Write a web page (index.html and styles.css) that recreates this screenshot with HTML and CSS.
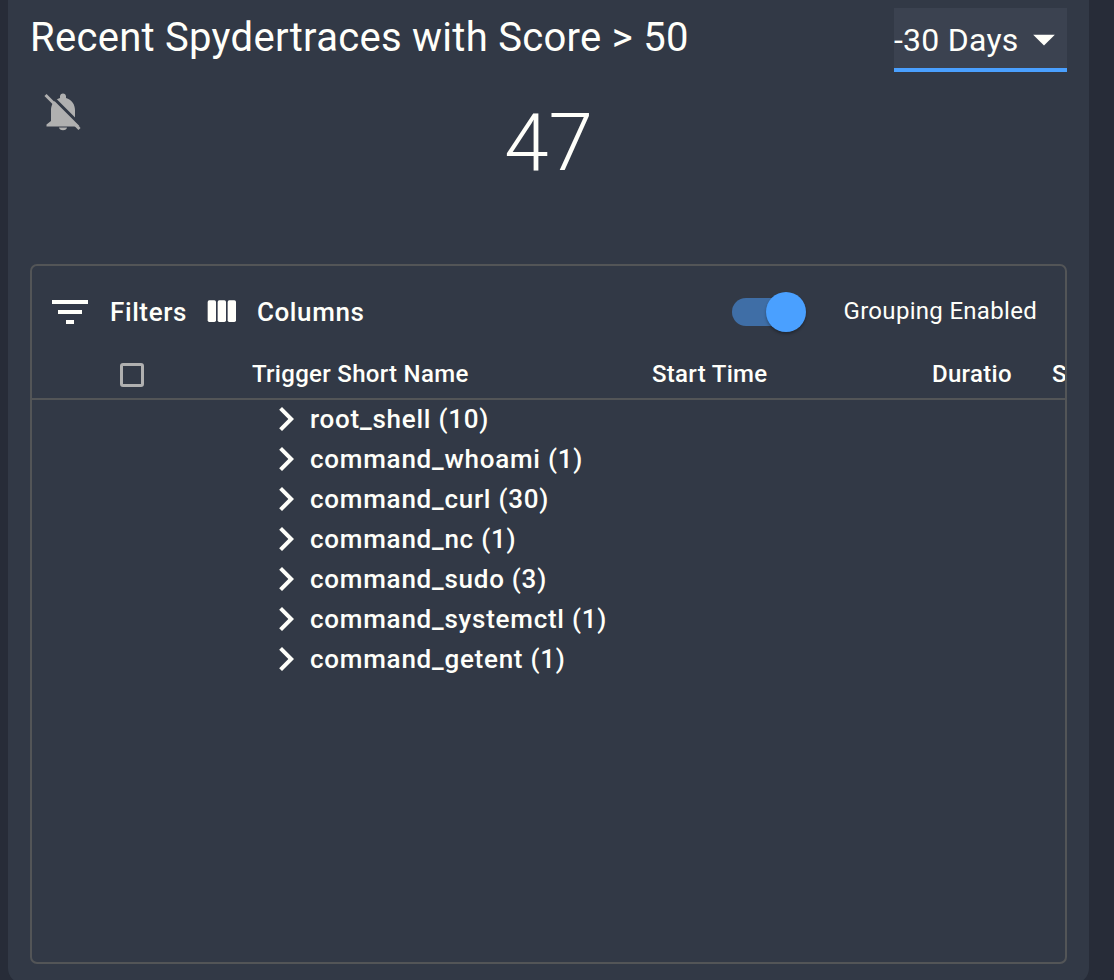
FILE: index.html
```html
<!DOCTYPE html>
<html lang="en">
<head>
<meta charset="utf-8">
<title>Recent Spydertraces</title>
<link rel="stylesheet" href="styles.css">
</head>
<body>
<main class="panel">
  <header class="head">
    <h1 class="title">Recent Spydertraces with Score &gt; 50</h1>
    <div class="select"><span class="select-text">-30 Days</span><svg class="select-arrow" viewBox="0 0 24 24"><path d="M7 10l5 5 5-5z"/></svg></div>
  </header>
  <section class="stat">
    <svg class="bell" viewBox="0 0 48 48">
      <path d="M27 5.5c-1.6 0-3 1.3-3 3V10c-5.5 1.4-9 6.3-9 12v11l-4.5 3.5v2h33v-2L39 33V22c0-5.7-3.5-10.6-9-12V8.500c0-1.700-1.400-3-3-3z"/>
      <path d="M23 39.500h8c0 1.500-1.800 2.800-4 2.800s-4-1.300-4-2.800z"/>
      <path class="bell-gap" d="M11 3.500L46 38.500"/>
      <path class="bell-slash" d="M9.500 7L43.500 41"/>
    </svg>
    <div class="count">47</div>
  </section>
  <section class="grid">
    <div class="toolbar">
      <svg class="ic-filter" viewBox="0 0 24 24"><path d="M10 18h4v-2h-4v2zM3 6v2h18V6H3zm3 7h12v-2H6v2z"/></svg>
      <span class="tool-label">Filters</span>
      <svg class="ic-cols" viewBox="0 0 24 24"><rect x="4" y="5" width="5" height="13" rx="1"/><rect x="10" y="5" width="5" height="13" rx="1"/><rect x="16" y="5" width="5" height="13" rx="1"/></svg>
      <span class="tool-label">Columns</span>
      <div class="switch"><span class="track"></span><span class="thumb"></span></div>
      <span class="switch-label">Grouping Enabled</span>
    </div>
    <div class="cols">
      <div class="col-check"><span class="checkbox"></span></div>
      <div class="col col-name">Trigger Short Name</div>
      <div class="col col-start">Start Time</div>
      <div class="col col-dur">Duratio</div>
      <div class="col col-s">S</div>
    </div>
    <ul class="rows">
      <li class="row"><svg class="chev" viewBox="0 0 24 24"><path d="M10 6L8.59 7.41 13.17 12l-4.58 4.59L10 18l6-6z"/></svg><span>root_shell (10)</span></li>
      <li class="row"><svg class="chev" viewBox="0 0 24 24"><path d="M10 6L8.59 7.41 13.17 12l-4.58 4.59L10 18l6-6z"/></svg><span>command_whoami (1)</span></li>
      <li class="row"><svg class="chev" viewBox="0 0 24 24"><path d="M10 6L8.59 7.41 13.17 12l-4.58 4.59L10 18l6-6z"/></svg><span>command_curl (30)</span></li>
      <li class="row"><svg class="chev" viewBox="0 0 24 24"><path d="M10 6L8.59 7.41 13.17 12l-4.58 4.59L10 18l6-6z"/></svg><span>command_nc (1)</span></li>
      <li class="row"><svg class="chev" viewBox="0 0 24 24"><path d="M10 6L8.59 7.41 13.17 12l-4.58 4.59L10 18l6-6z"/></svg><span>command_sudo (3)</span></li>
      <li class="row"><svg class="chev" viewBox="0 0 24 24"><path d="M10 6L8.59 7.41 13.17 12l-4.58 4.59L10 18l6-6z"/></svg><span>command_systemctl (1)</span></li>
      <li class="row"><svg class="chev" viewBox="0 0 24 24"><path d="M10 6L8.59 7.41 13.17 12l-4.58 4.59L10 18l6-6z"/></svg><span>command_getent (1)</span></li>
    </ul>
  </section>
</main>
</body>
</html>
```
FILE: styles.css
```css
html, body {
  margin: 0;
  height: 980px;
  overflow: hidden;
  background: #272c38;
}
body {
  font-family: Roboto, "Liberation Sans", sans-serif;
  color: #fffffa;
}
.panel {
  box-sizing: border-box;
  width: 1081px;
  height: 984px;
  margin-left: 8px;
  padding-top: 8px;
  background: #323946;
  border-radius: 0 0 16px 16px;
}
.head {
  display: flex;
  justify-content: space-between;
  align-items: flex-start;
  height: 64px;
  padding: 0 22px;
}
.title {
  margin: 0;
  font-size: 40px;
  font-weight: 400;
  letter-spacing: .28px;
  line-height: 60px;
}
.select {
  box-sizing: border-box;
  display: flex;
  align-items: center;
  width: 173px;
  height: 64px;
  border-bottom: 4px solid #4aa0ff;
  background: #3b4250;
}
.select-text {
  flex: none;
  margin-top: 3px;
  font-size: 32px;
  letter-spacing: .25px;
  line-height: 60px;
  white-space: nowrap;
}
.select-arrow {
  flex: none;
  width: 52px;
  height: 52px;
  margin: 2px 0 0 -1px;
  fill: #fffffa;
}
.stat {
  display: grid;
  grid-template-columns: 1fr auto 1fr;
  height: 192px;
}
.bell {
  width: 48px;
  height: 48px;
  margin: 16px 0 0 28px;
  fill: #b0b0b0;
}
.bell-gap {
  fill: none;
  stroke: #323946;
  stroke-width: 3;
}
.bell-slash {
  fill: none;
  stroke: #b0b0b0;
  stroke-width: 3;
}
.count {
  font-size: 80px;
  font-weight: 300;
  line-height: 142px;
}
.grid {
  box-sizing: border-box;
  height: 700px;
  margin: 0 22px;
  border: 2px solid #535557;
  border-radius: 7px;
  overflow: hidden;
}
.toolbar {
  display: flex;
  align-items: center;
  height: 92px;
  padding-left: 14px;
}
.ic-filter {
  width: 48px;
  height: 48px;
  margin-right: 16px;
  fill: #fffffa;
}
.tool-label {
  font-size: 26px;
  font-weight: 500;
  letter-spacing: .6px;
}
.ic-cols {
  width: 40px;
  height: 40px;
  margin: 0 16px 0 14px;
  fill: #fffffa;
}
.switch {
  position: relative;
  width: 74px;
  height: 40px;
  margin-left: auto;
}
.track {
  position: absolute;
  top: 6px;
  left: 0;
  width: 56px;
  height: 28px;
  border-radius: 14px;
  background: #3f6ea6;
}
.thumb {
  position: absolute;
  top: 0;
  left: 34px;
  width: 40px;
  height: 40px;
  border-radius: 50%;
  background: #4aa0ff;
  box-shadow: 0 2px 3px rgba(0, 0, 0, .3);
}
.switch-label {
  margin: -2px 28px 0 38px;
  font-size: 24px;
  letter-spacing: .3px;
}
.cols {
  display: flex;
  align-items: center;
  height: 32px;
  padding-bottom: 8px;
  border-bottom: 2px solid #535557;
  white-space: nowrap;
}
.col-check {
  box-sizing: border-box;
  display: flex;
  flex: none;
  width: 220px;
  padding: 2px 0 0 88px;
}
.checkbox {
  box-sizing: border-box;
  width: 24px;
  height: 24px;
  border: 3px solid #b0b0b0;
  border-radius: 3px;
}
.col {
  flex: none;
  font-size: 24px;
  font-weight: 500;
  letter-spacing: .3px;
  overflow: hidden;
}
.col-name { width: 400px; }
.col-start { width: 280px; }
.col-dur { width: 120px; }
.col-s { width: 20px; }
.rows {
  margin: -1px 0 0;
  padding: 0 0 0 230px;
  list-style: none;
}
.row {
  display: flex;
  align-items: center;
  height: 40px;
  font-size: 26px;
  font-weight: 500;
  letter-spacing: .75px;
}
.chev {
  flex: none;
  width: 48px;
  height: 48px;
  fill: #fffffa;
}
```
